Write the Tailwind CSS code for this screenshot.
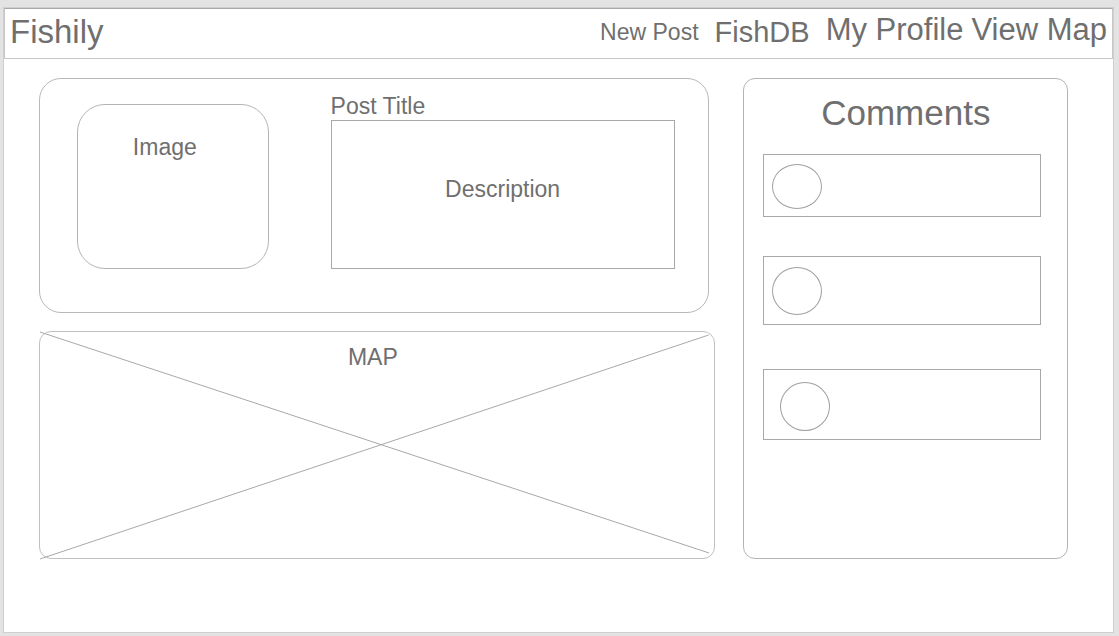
<!DOCTYPE html>
<html lang="en">
<head>
<meta charset="utf-8">
<meta name="viewport" content="width=device-width, initial-scale=1">
<title>Fishily</title>
<script src="https://cdn.jsdelivr.net/npm/@tailwindcss/browser@4"></script>
</head>
<body class="flex min-h-screen flex-col bg-[#e3e3e3] pt-[7px] pr-[5px] pb-[3px] pl-[3px] font-['Liberation_Sans',Arial,sans-serif] text-2xl leading-7 text-[#6f6f6f]">
  <div class="flex flex-1 flex-col border border-[#cfcfcf] bg-white">
    <header class="flex items-center justify-between border border-[#c8c8c8] border-t-[#a8a8a8] pt-1 pr-[5px] pb-2 pl-1">
      <a href="#" class="pl-px text-[33px] leading-[37px]">Fishily</a>
      <nav class="flex items-center leading-8 whitespace-nowrap">
        <a href="#" class="mr-4 text-[23px]">New Post</a>
        <a href="#" class="mr-4 text-[29px]">FishDB</a>
        <a href="#" class="mr-2 pb-1 text-[31px]">My Profile</a>
        <a href="#" class="pb-1 text-[31px]">View Map</a>
      </nav>
    </header>

    <main class="grid flex-1 grid-cols-[675fr_325fr] content-start gap-x-7 pt-[19px] pr-[45px] pb-15 pl-[35px]">
      <div class="flex flex-col gap-[18px]">
        <article class="mr-[6px] grid grid-cols-[191fr_343fr] gap-x-[62px] rounded-[22px] border border-[#b8b8b8] pt-[25px] pr-[33px] pb-[43px] pl-[37px]">
          <div class="row-span-2 rounded-[28px] border border-[#b4b4b4] pt-7 pr-4 text-center text-[23px]">Image</div>
          <h2 class="-mt-3 pt-3 pb-0 text-[23px] leading-7"><span class="block -mt-3">Post Title</span></h2>
          <div class="flex h-[149px] items-center justify-center border border-[#a8a8a8] pb-3 text-[23px]">Description</div>
        </article>

        <section class="relative h-[228px] rounded-xl border border-[#c0c0c0] pt-[11px] text-center text-[23px]">
          <svg class="absolute -inset-px size-[calc(100%+2px)] overflow-visible" viewBox="0 0 675 228" preserveAspectRatio="none" fill="none" stroke="#a8a8a8" stroke-width="1" aria-hidden="true">
            <path d="M1 1 669.500 222M1 228 669 4" vector-effect="non-scaling-stroke"/>
          </svg>
          <h2 class="relative pr-2">MAP</h2>
        </section>
      </div>

      <aside class="rounded-xl border border-[#b4b4b4] pt-4 pr-[26px] pb-4 pl-[19px]">
        <h2 class="pl-2 text-center text-[35px] leading-9">Comments</h2>
        <ul class="mt-[23px]">
          <li class="h-[63px] border border-[#a8a8a8] pt-[9px] pl-2"><div class="h-[45px] w-[50px] rounded-[50%] border border-[#a0a0a0]"></div></li>
          <li class="mt-[39px] h-[69px] border border-[#a8a8a8] pt-[10px] pl-2"><div class="h-[48px] w-[50px] rounded-[50%] border border-[#a0a0a0]"></div></li>
          <li class="mt-11 h-[71px] border border-[#a8a8a8] pt-3 pl-4"><div class="h-[49px] w-[50px] rounded-[50%] border border-[#a0a0a0]"></div></li>
        </ul>
      </aside>
    </main>
  </div>
</body>
</html>
